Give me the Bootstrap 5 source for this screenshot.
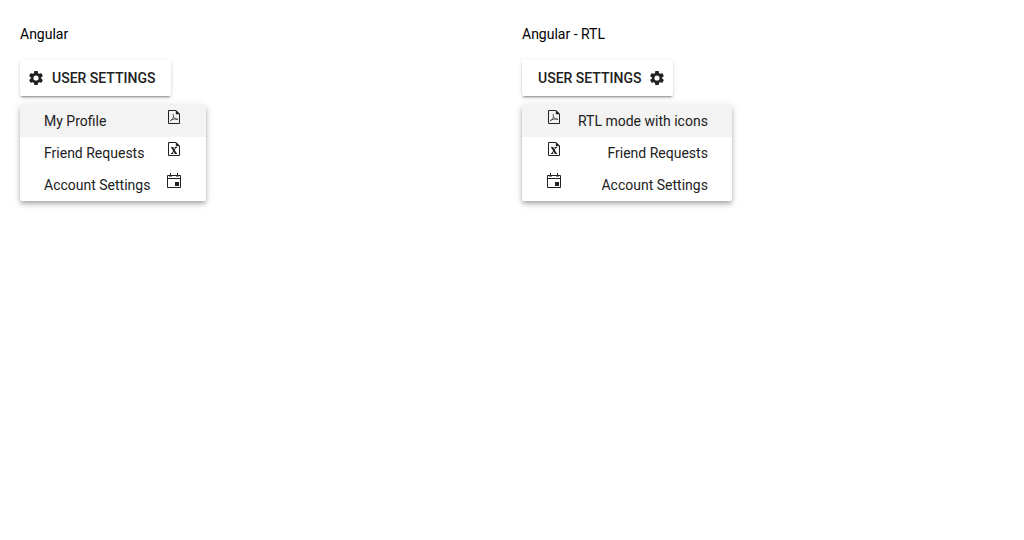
<!DOCTYPE html>
<html lang="en">
<head>
<meta charset="utf-8">
<meta name="viewport" content="width=device-width, initial-scale=1">
<title>User settings menus</title>
<link href="https://cdn.jsdelivr.net/npm/bootstrap@5.3.0/dist/css/bootstrap.min.css" rel="stylesheet">
<style>
  body { font: 14px/20px Roboto, "Liberation Sans", sans-serif; color: #000; background: #fff; }
  .demo-page { display: grid; grid-template-columns: 1fr 1fr; gap: 20px; padding: 24px 20px; }
  .demo-title { font-size: 14px; line-height: 20px; font-weight: 400; margin: 0 0 16px; }
  .settings-btn {
    --bs-btn-font-size: 14px; --bs-btn-line-height: 20px; --bs-btn-font-weight: 500;
    --bs-btn-color: #212121; --bs-btn-bg: #fff; --bs-btn-border-width: 0px;
    --bs-btn-hover-bg: #f5f5f5; --bs-btn-active-bg: #eee; --bs-btn-border-radius: 2px;
    padding-block: 8px; padding-inline: 8px 16px;
    box-shadow: 0 3px 1px -2px rgba(0,0,0,.2), 0 2px 2px 0 rgba(0,0,0,.14), 0 1px 5px 0 rgba(0,0,0,.12);
  }
  .settings-menu {
    --bs-dropdown-min-width: 0; --bs-dropdown-padding-y: 0; --bs-dropdown-font-size: 14px;
    --bs-dropdown-border-width: 0; --bs-dropdown-border-radius: 2px;
    --bs-dropdown-link-color: #212121; --bs-dropdown-link-hover-color: #212121;
    --bs-dropdown-link-hover-bg: #f3f3f3;
    --bs-dropdown-item-padding-x: 24px; --bs-dropdown-item-padding-y: 6px;
    width: fit-content; text-align: start; margin-top: 9px;
    box-shadow: 0 2px 4px -1px rgba(0,0,0,.2), 0 4px 5px 0 rgba(0,0,0,.14), 0 1px 10px 0 rgba(0,0,0,.12);
  }
  .settings-menu .focused { background: #f3f3f3; }
  .menu-icon { margin-top: -2px; }
</style>
</head>
<body>
<svg class="d-none" aria-hidden="true">
  <symbol id="gear" viewBox="0 0 16 16">
    <path fill="#212121" transform="translate(-.4 -.4) scale(.7)" d="M19.43 12.98c.04-.32.07-.64.07-.98s-.03-.66-.07-.98l2.11-1.65c.19-.15.24-.42.12-.64l-2-3.46c-.12-.22-.39-.3-.61-.22l-2.49 1c-.52-.4-1.08-.73-1.69-.98l-.38-2.65C14.46 2.18 14.25 2 14 2h-4c-.25 0-.46.18-.49.42l-.38 2.65c-.61.25-1.17.59-1.69.98l-2.49-1c-.23-.09-.49 0-.61.22l-2 3.46c-.13.22-.07.49.12.64l2.11 1.65c-.04.32-.07.65-.07.98s.03.66.07.98l-2.11 1.65c-.19.15-.24.42-.12.64l2 3.46c.12.22.39.3.61.22l2.49-1c.52.4 1.08.73 1.69.98l.38 2.65c.03.24.24.42.49.42h4c.25 0 .46-.18.49-.42l.38-2.65c.61-.25 1.17-.59 1.69-.98l2.49 1c.23.09.49 0 .61-.22l2-3.46c.12-.22.07-.49-.12-.64l-2.11-1.65zM12 15.7a3.7 3.7 0 1 1 0-7.4 3.7 3.7 0 0 1 0 7.4z"/>
  </symbol>
  <symbol id="pdf" viewBox="0 0 16 16">
    <path d="M2.5 1.5H10L13.5 5v9.5h-11z" fill="none" stroke="#212121"/>
    <path d="M9.8 1L14 5.2H9.800z" fill="#212121"/>
    <path d="M7.300 4.800C6.700 6 7.700 8.300 8.600 9.300 9.500 10.200 11 10.600 12 10.500M7.600 7.500C7.300 9 5.800 11.500 4 12.200M4.500 11.300C6.500 10.200 9.500 9.600 11.800 10" fill="none" stroke="#212121" stroke-width=".7"/>
  </symbol>
  <symbol id="sheet" viewBox="0 0 16 16">
    <path d="M2.5 1.5H10L13.5 5v9.5h-11z" fill="none" stroke="#212121"/>
    <path d="M9.8 1L14 5.2H9.800z" fill="#212121"/>
    <path d="M5 6.500h2.300M8.700 6.500H11M5 12.500h2.300M8.700 12.500H11M9.800 6.500L6 12.500" fill="none" stroke="#212121"/>
    <path d="M6.200 6.500l3.600 6" stroke="#212121" stroke-width="1.800"/>
  </symbol>
  <symbol id="calendar" viewBox="0 0 16 16">
    <path d="M1.500 2.500h13v12h-13zM1.500 5.500h13" fill="none" stroke="#212121"/>
    <path d="M4 0h1v2h1v1.500H3V2h1zM11 0h1v2h1v1.500h-3V2h1zM9 9h4v4H9z" fill="#212121"/>
  </symbol>
</svg>

<main class="demo-page">
  <section>
    <h2 class="demo-title">Angular</h2>
    <div class="dropdown">
      <button type="button" class="btn settings-btn d-flex align-items-center gap-2" aria-expanded="true">
        <svg width="16" height="16" aria-hidden="true"><use href="#gear"/></svg>
        <span>USER SETTINGS</span>
      </button>
      <ul class="dropdown-menu settings-menu show position-static">
        <li><button type="button" class="dropdown-item focused d-flex justify-content-between gap-3">My Profile <svg class="menu-icon" width="16" height="16" aria-hidden="true"><use href="#pdf"/></svg></button></li>
        <li><button type="button" class="dropdown-item d-flex justify-content-between gap-3">Friend Requests <svg class="menu-icon" width="16" height="16" aria-hidden="true"><use href="#sheet"/></svg></button></li>
        <li><button type="button" class="dropdown-item d-flex justify-content-between gap-3">Account Settings <svg class="menu-icon" width="16" height="16" aria-hidden="true"><use href="#calendar"/></svg></button></li>
      </ul>
    </div>
  </section>
  <section>
    <h2 class="demo-title">Angular - RTL</h2>
    <div class="dropdown">
      <button type="button" dir="rtl" class="btn settings-btn d-flex align-items-center gap-2" aria-expanded="true">
        <svg width="16" height="16" aria-hidden="true"><use href="#gear"/></svg>
        <span>USER SETTINGS</span>
      </button>
      <ul dir="rtl" class="dropdown-menu settings-menu show position-static">
        <li><button type="button" class="dropdown-item focused d-flex justify-content-between gap-3">RTL mode with icons <svg class="menu-icon" width="16" height="16" aria-hidden="true"><use href="#pdf"/></svg></button></li>
        <li><button type="button" class="dropdown-item d-flex justify-content-between gap-3">Friend Requests <svg class="menu-icon" width="16" height="16" aria-hidden="true"><use href="#sheet"/></svg></button></li>
        <li><button type="button" class="dropdown-item d-flex justify-content-between gap-3">Account Settings <svg class="menu-icon" width="16" height="16" aria-hidden="true"><use href="#calendar"/></svg></button></li>
      </ul>
    </div>
  </section>
</main>
<script src="https://cdn.jsdelivr.net/npm/bootstrap@5.3.0/dist/js/bootstrap.bundle.min.js"></script>
</body>
</html>
